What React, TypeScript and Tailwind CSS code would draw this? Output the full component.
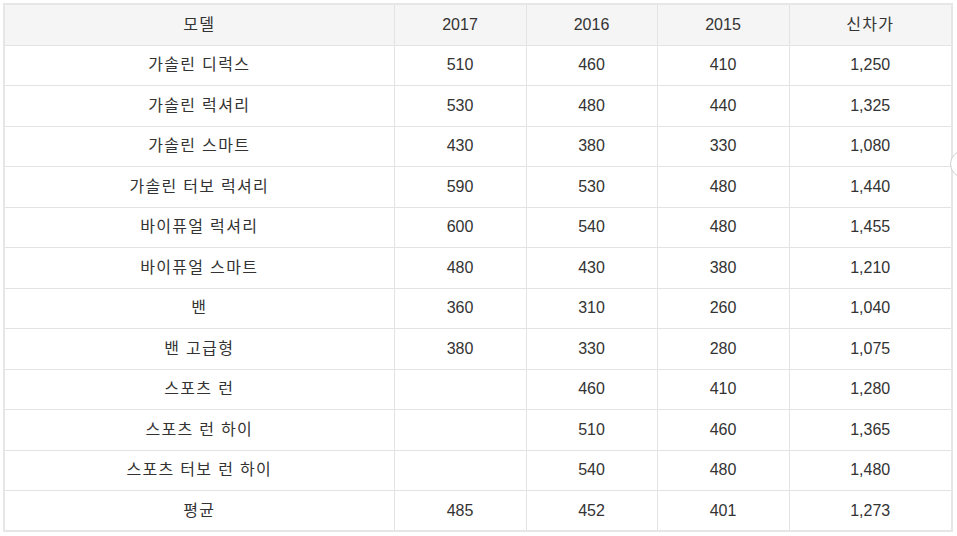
const rows: [string, string, string, string, string][] = [
  ["가솔린 디럭스", "510", "460", "410", "1,250"],
  ["가솔린 럭셔리", "530", "480", "440", "1,325"],
  ["가솔린 스마트", "430", "380", "330", "1,080"],
  ["가솔린 터보 럭셔리", "590", "530", "480", "1,440"],
  ["바이퓨얼 럭셔리", "600", "540", "480", "1,455"],
  ["바이퓨얼 스마트", "480", "430", "380", "1,210"],
  ["밴", "360", "310", "260", "1,040"],
  ["밴 고급형", "380", "330", "280", "1,075"],
  ["스포츠 런", "", "460", "410", "1,280"],
  ["스포츠 런 하이", "", "510", "460", "1,365"],
  ["스포츠 터보 런 하이", "", "540", "480", "1,480"],
  ["평균", "485", "452", "401", "1,273"],
]

const cell = "border border-[#e3e3e3] text-center align-middle font-normal"
const ko = "tracking-[1.3px]"

export default function App() {
  return (
    <div
      className="relative w-[957px] h-[536px] overflow-hidden bg-white text-[16px] text-[#333333]"
      style={{ fontFamily: '"Liberation Sans", "Noto Sans CJK KR", sans-serif' }}
    >
      <div className="pt-[3px] pl-[3px]">
        <table className="w-[950px] border-collapse border-2 border-[#e6e6e6] table-fixed">
          <colgroup>
            <col className="w-[390px]" />
            <col className="w-[132px]" />
            <col className="w-[131px]" />
            <col className="w-[132px]" />
            <col />
          </colgroup>
          <thead>
            <tr className="h-[41px] bg-[#f5f5f5]">
              <th className={`${cell} ${ko}`}>모델</th>
              <th className={cell}>2017</th>
              <th className={cell}>2016</th>
              <th className={cell}>2015</th>
              <th className={`${cell} ${ko}`}>신차가</th>
            </tr>
          </thead>
          <tbody>
            {rows.map((r) => (
              <tr key={r[0]} className="h-[40.5px]">
                {r.map((v, i) => (
                  <td key={i} className={i === 0 ? `${cell} ${ko}` : cell}>
                    {v}
                  </td>
                ))}
              </tr>
            ))}
          </tbody>
        </table>
      </div>
      {/* partially hidden scroll button on the right edge */}
      <div className="absolute left-[950px] top-[150px] w-[28px] h-[28px] rounded-full border border-[#d0d0d0] bg-white" />
    </div>
  )
}
